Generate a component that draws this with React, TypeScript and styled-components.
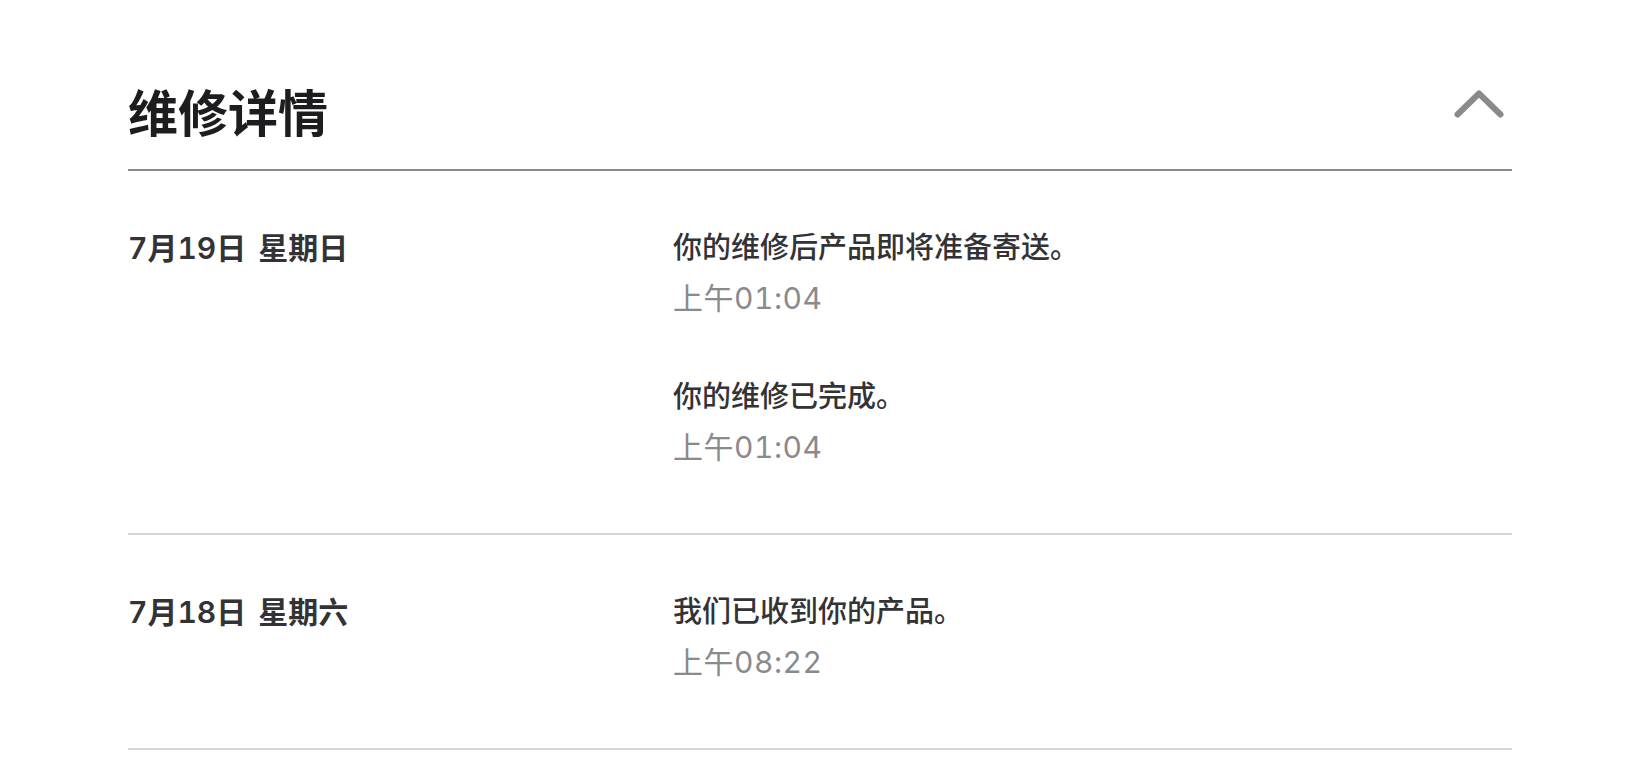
import React from "react";
import styled, { createGlobalStyle } from "styled-components";

const GlobalStyle = createGlobalStyle`
  html, body {
    margin: 0;
    padding: 0;
    background: #ffffff;
  }
  body {
    font-family: Inter, "Noto Sans CJK SC", "Noto Sans", sans-serif;
    -webkit-font-smoothing: antialiased;
  }
`;

const Page = styled.div`
  padding: 85px 128px 0 128px;
  width: 1384px;
`;

const Header = styled.div`
  display: flex;
  align-items: center;
  justify-content: space-between;
  padding-bottom: 34px;
  border-bottom: 2px solid #8a8a8a;
`;

const Title = styled.h2`
  margin: 0;
  font-family: "Noto Sans CJK SC", sans-serif;
  font-size: 50px;
  line-height: 50px;
  font-weight: 700;
  color: #1d1d1f;
`;

const ToggleButton = styled.button`
  display: flex;
  align-items: center;
  justify-content: center;
  background: none;
  border: none;
  padding: 0;
  margin: 0 8px 12px 0;
  cursor: pointer;
`;

const Row = styled.div`
  display: grid;
  grid-template-columns: 545px 1fr;
  padding: 54px 0 63px 0;
  border-bottom: 2px solid #d6d6d6;
`;

const DateLabel = styled.div`
  display: flex;
  gap: 12px;
  font-family: Inter, "Noto Sans CJK SC", sans-serif;
  font-variant-numeric: tabular-nums;
  font-size: 30px;
  line-height: 46px;
  font-weight: 600;
  color: #333336;
  align-self: start;
`;

const Events = styled.div`
  display: flex;
  flex-direction: column;
  gap: 53px;
`;

const Event = styled.div`
  display: flex;
  flex-direction: column;
  gap: 4px;
`;

const EventText = styled.div`
  font-family: Inter, "Noto Sans CJK SC", sans-serif;
  font-size: 29px;
  line-height: 46px;
  font-weight: 500;
  color: #333336;
`;

const EventTime = styled.div`
  font-family: Inter, "Noto Sans CJK SC", sans-serif;
  font-variant-numeric: tabular-nums;
  font-size: 30px;
  line-height: 46px;
  letter-spacing: 0.5px;
  font-weight: 400;
  color: #8a8a8d;
`;

const ChevronUp = () => (
  <svg width="50" height="28" viewBox="0 0 50 28" fill="none">
    <path
      d="M3.5 24.5 L25 3.5 L46.5 24.5"
      stroke="#8a8a8a"
      strokeWidth="6"
      strokeLinecap="round"
      strokeLinejoin="round"
    />
  </svg>
);

const data = [
  {
    day: "7月19日",
    weekday: "星期日",
    events: [
      { text: "你的维修后产品即将准备寄送。", time: "上午01:04" },
      { text: "你的维修已完成。", time: "上午01:04" },
    ],
  },
  {
    day: "7月18日",
    weekday: "星期六",
    events: [{ text: "我们已收到你的产品。", time: "上午08:22" }],
  },
];

export default function App() {
  return (
    <>
      <GlobalStyle />
      <Page>
        <Header>
          <Title>维修详情</Title>
          <ToggleButton aria-label="收起">
            <ChevronUp />
          </ToggleButton>
        </Header>
        {data.map((d) => (
          <Row key={d.day}>
            <DateLabel>
              <span>{d.day}</span>
              <span>{d.weekday}</span>
            </DateLabel>
            <Events>
              {d.events.map((e, i) => (
                <Event key={i}>
                  <EventText>{e.text}</EventText>
                  <EventTime>{e.time}</EventTime>
                </Event>
              ))}
            </Events>
          </Row>
        ))}
      </Page>
    </>
  );
}
